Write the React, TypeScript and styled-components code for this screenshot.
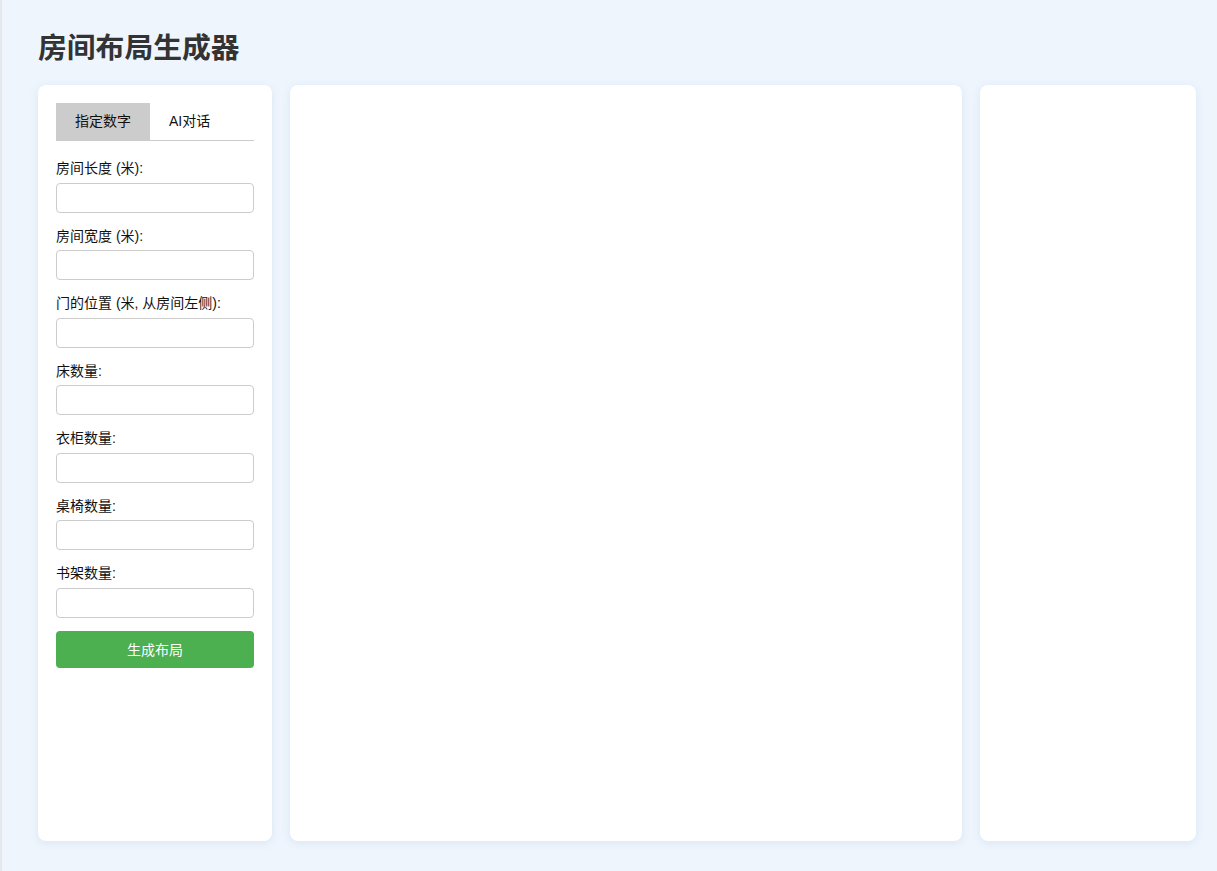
import { useState } from "react";
import styled, { createGlobalStyle } from "styled-components";

const GlobalStyle = createGlobalStyle`
  html, body {
    margin: 0;
    padding: 0;
    background: #eef5fd;
  }
  body {
    font-family: "Liberation Sans", "Noto Sans CJK SC", sans-serif;
    color: #222;
  }
  * {
    box-sizing: border-box;
  }
`;

const fields = [
  "房间长度 (米):",
  "房间宽度 (米):",
  "门的位置 (米, 从房间左侧):",
  "床数量:",
  "衣柜数量:",
  "桌椅数量:",
  "书架数量:",
];

const App = () => {
  const [tab, setTab] = useState<"num" | "ai">("num");

  return (
    <>
      <GlobalStyle />
      <Page>
        <Title>房间布局生成器</Title>
        <Main>
          <SidePanel>
            <Tabs>
              <Tab active={tab === "num"} onClick={() => setTab("num")}>
                指定数字
              </Tab>
              <Tab active={tab === "ai"} onClick={() => setTab("ai")}>
                AI对话
              </Tab>
            </Tabs>
            {fields.map((f) => (
              <FormGroup key={f}>
                <Label>{f}</Label>
                <Input type="number" />
              </FormGroup>
            ))}
            <Button>生成布局</Button>
          </SidePanel>
          <CanvasPanel />
          <InfoPanel />
        </Main>
      </Page>
    </>
  );
};

const Page = styled.div`
  height: 871px;
  padding: 0 21px 30px 36px;
  border-left: 2px solid #e4e8ec;
  display: flex;
  flex-direction: column;
`;

const Title = styled.h1`
  margin: 0;
  height: 85px;
  padding-top: 30px;
  font-size: 28.8px;
  line-height: 36px;
  font-weight: 700;
  color: #333;
  font-family: "Liberation Sans", "Noto Sans CJK SC", sans-serif;
`;

const Main = styled.div`
  flex: 1;
  display: flex;
  gap: 18px;
  min-height: 0;
`;

const Panel = styled.div`
  background: #fff;
  border-radius: 8px;
  box-shadow: 0 2px 10px rgba(60, 100, 150, 0.1);
`;

const SidePanel = styled(Panel)`
  width: 234px;
  padding: 18px;
`;

const CanvasPanel = styled(Panel)`
  flex: 1;
`;

const InfoPanel = styled(Panel)`
  width: 216px;
`;

const Tabs = styled.div`
  display: flex;
  border-bottom: 1px solid #ccc;
  margin-bottom: 19px;
`;

const Tab = styled.button<{ active?: boolean }>`
  border: none;
  background: ${(p) => (p.active ? "#ccc" : "transparent")};
  padding: 10px 19px;
  font-size: 14px;
  line-height: 17px;
  color: #111;
  cursor: pointer;
  font-family: "Liberation Sans", "Noto Sans CJK SC", sans-serif;
`;

const FormGroup = styled.div`
  margin-bottom: 15px;
`;

const Label = styled.label`
  display: block;
  font-size: 14px;
  line-height: 17.5px;
  margin-bottom: 5px;
  color: #111;
`;

const Input = styled.input`
  display: block;
  width: 100%;
  height: 30px;
  border: 1px solid #ccc;
  border-radius: 4px;
  padding: 0 8px;
  font-size: 14px;
  background: #fff;
`;

const Button = styled.button`
  display: block;
  width: 100%;
  margin-top: -2px;
  height: 37px;
  border: none;
  border-radius: 4px;
  background: #4caf50;
  color: #fff;
  font-size: 14px;
  cursor: pointer;
  font-family: "Liberation Sans", "Noto Sans CJK SC", sans-serif;
`;

export default App;
